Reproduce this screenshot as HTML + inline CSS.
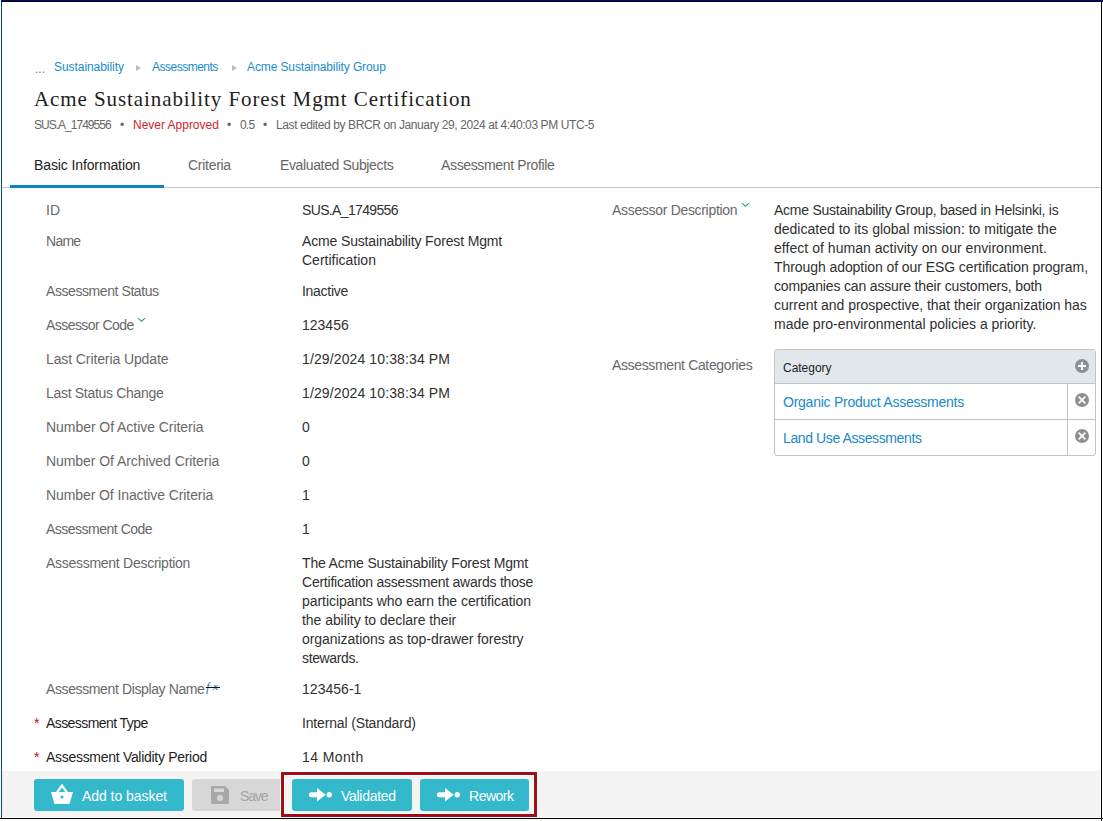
<!DOCTYPE html>
<html><head><meta charset="utf-8">
<style>
*{margin:0;padding:0;box-sizing:border-box}
html,body{width:1103px;height:821px;overflow:hidden;background:#fff}
body{position:relative;font-family:"Liberation Sans",sans-serif;font-size:14px;color:#333}
.a{position:absolute;white-space:nowrap}
.t14{font-size:14px;line-height:19px}
.lbl,.lbl2{font-size:14px;line-height:19px;color:#686868}
.val{font-size:14px;line-height:19px;color:#303030}
.lnk{font-size:14px;line-height:19px;color:#1a8ac8}
.bc{font-size:12px;line-height:16px;color:#1a8ccc}
.sub{font-size:12px;line-height:16px;color:#666}
.ttl{font-family:"Liberation Serif",serif;font-size:21px;line-height:26px;color:#1e1e1e}
.tab{font-size:14px;line-height:19px;color:#666}
.cat{font-size:12px;line-height:14px;color:#1e1e1e}
.btxt{font-size:14px;line-height:19px;color:#fff}
.btn{position:absolute;top:779px;height:32px;border-radius:3px;background:#33b8cc}
</style></head><body>
<div class="a" style="left:1px;top:0;width:1102px;height:1px;background:#000b5e"></div>
<div class="a" style="left:1px;top:1px;width:1102px;height:1px;background:#00002e"></div>
<div class="a" style="left:1px;top:2px;width:1px;height:817px;background:#00505e"></div>
<div class="a" style="left:1101px;top:2px;width:1px;height:819px;background:#000"></div>
<div class="a" style="left:0;top:818px;width:1103px;height:1px;background:#000"></div>

<div class="a" style="left:136px;top:65px;width:0;height:0;border-left:5.5px solid #bbb;border-top:3.5px solid transparent;border-bottom:3.5px solid transparent"></div>
<div class="a" style="left:232px;top:65px;width:0;height:0;border-left:5.5px solid #bbb;border-top:3.5px solid transparent;border-bottom:3.5px solid transparent"></div>
<div class="a sub" style="left:120px;top:117px">&bull;</div>
<div class="a sub" style="left:227px;top:117px">&bull;</div>
<div class="a sub" style="left:263px;top:117px">&bull;</div>

<div class="a" style="left:2px;top:187px;width:1099px;height:1px;background:#c8c8c8"></div>
<div class="a" style="left:10px;top:185px;width:154px;height:3px;background:#0a84c6"></div>

<svg class="a" style="left:137px;top:317px" width="9" height="6" viewBox="0 0 9 6"><path d="M1 1.2 L4.5 4.2 L8 1.2" fill="none" stroke="#22a56a" stroke-width="1.1"/></svg>
<svg class="a" style="left:741px;top:202px" width="9" height="6" viewBox="0 0 9 6"><path d="M1 1.2 L4.5 4.2 L8 1.2" fill="none" stroke="#22a56a" stroke-width="1.1"/></svg>
<div class="a" style="left:206px;top:680px;font-family:'Liberation Serif',serif;font-style:italic;font-size:13px;line-height:13px;color:#1a7fd0">f</div><div class="a" style="left:213px;top:682px;font-family:'Liberation Serif',serif;font-style:italic;font-weight:bold;font-size:10px;line-height:10px;color:#1a7fd0">x</div>
<div class="a" style="left:206px;top:687px;width:14px;height:1px;background:#111"></div>

<div class="a" style="left:774px;top:349px;width:322px;height:107px;border:1px solid #c4c4c4;border-radius:3px;overflow:hidden">
  <div class="a" style="left:0;top:0;width:320px;height:34px;background:#e1e8eb;border-bottom:1px solid #c4c4c4"></div>
  <div class="a" style="left:0;top:69px;width:320px;height:1px;background:#c4c4c4"></div>
  <div class="a" style="left:292px;top:34px;width:1px;height:72px;background:#c4c4c4"></div>
</div>
<svg class="a" style="left:1075px;top:359px" width="14" height="14" viewBox="0 0 14 14"><circle cx="7" cy="7" r="7" fill="#8b9094"/><path d="M7 3v8M3 7h8" stroke="#fff" stroke-width="2"/></svg>
<svg class="a" style="left:1075px;top:393px" width="14" height="14" viewBox="0 0 14 14"><circle cx="7" cy="7" r="7" fill="#8f8f8f"/><path d="M3.7 3.7l6.6 6.6M10.3 3.7l-6.6 6.6" stroke="#fff" stroke-width="1.7"/></svg>
<svg class="a" style="left:1075px;top:429px" width="14" height="14" viewBox="0 0 14 14"><circle cx="7" cy="7" r="7" fill="#8f8f8f"/><path d="M3.7 3.7l6.6 6.6M10.3 3.7l-6.6 6.6" stroke="#fff" stroke-width="1.7"/></svg>

<div class="a" style="left:2px;top:771px;width:1098px;height:46px;background:#f4f4f4"></div>
<div class="btn" style="left:34px;width:150px">
  <svg class="a" style="left:17px;top:5px" width="22" height="21" viewBox="0 0 22 21"><path d="M0 8h22l-3.5 12h-15z" fill="#fff"/><path d="M6 8.5L11 1.5L16 8.5" fill="none" stroke="#fff" stroke-width="2.2"/><circle cx="11" cy="13" r="1.6" fill="#33b8cc"/></svg>
</div>
<div class="btn" style="left:192px;width:90px;background:#d7d7d7">
  <svg class="a" style="left:19px;top:7px" width="18" height="18" viewBox="0 0 18 18"><path d="M1 0h13l4 4v13a1 1 0 0 1-1 1H1a1 1 0 0 1-1-1V1a1 1 0 0 1 1-1z" fill="#a8a8a8"/><rect x="3" y="2.5" width="10" height="3.5" fill="#d7d7d7"/><circle cx="9" cy="12" r="3" fill="#d7d7d7"/></svg>
</div>
<div class="btn" style="left:292px;width:120px">
  <svg class="a" style="left:16px;top:9px" width="24" height="14" viewBox="0 0 24 14"><path d="M3.4 6.8h7" stroke="#fff" stroke-width="5" stroke-linecap="round"/><path d="M9 0L17.7 6.8L9 13.6z" fill="#fff"/><circle cx="21.2" cy="6.8" r="2.7" fill="#fff"/></svg>
</div>
<div class="btn" style="left:420px;width:109px">
  <svg class="a" style="left:16px;top:9px" width="24" height="14" viewBox="0 0 24 14"><path d="M3.4 6.8h7" stroke="#fff" stroke-width="5" stroke-linecap="round"/><path d="M9 0L17.7 6.8L9 13.6z" fill="#fff"/><circle cx="21.2" cy="6.8" r="2.7" fill="#fff"/></svg>
</div>
<div class="a" style="left:280px;top:771px;width:258px;height:47px;border:1px solid #fff"></div>
<div class="a" style="left:281px;top:772px;width:256px;height:45px;border:3px solid #a10d16"></div>
<div class="a" style="left:284px;top:775px;width:250px;height:39px;border:1px solid #fff"></div>
<div id="bc0" class="a sub" style="left:35px;top:61px;color:#777">...</div>
<div id="bc1" class="a bc" style="left:54px;top:59px;letter-spacing:-0.061px;">Sustainability</div>
<div id="bc2" class="a bc" style="left:152px;top:59px;letter-spacing:-0.500px;">Assessments</div>
<div id="bc3" class="a bc" style="left:247px;top:59px;letter-spacing:-0.108px;">Acme Sustainability Group</div>
<div id="title" class="a ttl" style="left:34px;top:86px;letter-spacing:0.914px;">Acme Sustainability Forest Mgmt Certification</div>
<div id="sub1" class="a sub" style="left:34px;top:117px;letter-spacing:-0.983px;">SUS.A_1749556</div>
<div id="sub2" class="a sub" style="left:133px;top:117px;letter-spacing:-0.016px;color:#d4232c">Never Approved</div>
<div id="sub3" class="a sub" style="left:240px;top:117px;letter-spacing:-0.800px;">0.5</div>
<div id="sub4" class="a sub" style="left:276px;top:117px;letter-spacing:-0.397px;">Last edited by BRCR on January 29, 2024 at 4:40:03 PM UTC-5</div>
<div id="tab1" class="a tab" style="left:34px;top:156px;letter-spacing:-0.113px;color:#222">Basic Information</div>
<div id="tab2" class="a tab" style="left:188px;top:156px;letter-spacing:-0.285px;">Criteria</div>
<div id="tab3" class="a tab" style="left:280px;top:156px;letter-spacing:-0.364px;">Evaluated Subjects</div>
<div id="tab4" class="a tab" style="left:441px;top:156px;letter-spacing:-0.353px;">Assessment Profile</div>
<div id="l_id" class="a lbl" style="left:46px;top:201px;letter-spacing:0.200px;">ID</div>
<div id="v_id" class="a val" style="left:302px;top:201px;letter-spacing:-0.650px;">SUS.A_1749556</div>
<div id="l_name" class="a lbl" style="left:46px;top:232px;letter-spacing:-0.733px;">Name</div>
<div id="v_name" class="a val" style="left:302px;top:232px;letter-spacing:-0.147px;">Acme Sustainability Forest Mgmt</div>
<div id="l_status" class="a lbl" style="left:46px;top:282px;letter-spacing:-0.424px;">Assessment Status</div>
<div id="v_status" class="a val" style="left:302px;top:282px;letter-spacing:-0.285px;">Inactive</div>
<div id="l_acode" class="a lbl" style="left:46px;top:316px;letter-spacing:-0.550px;">Assessor Code</div>
<div id="v_acode" class="a val" style="left:302px;top:316px;">123456</div>
<div id="l_lcu" class="a lbl" style="left:46px;top:350px;letter-spacing:-0.105px;">Last Criteria Update</div>
<div id="v_lcu" class="a val" style="left:302px;top:350px;letter-spacing:0.120px;">1/29/2024 10:38:34 PM</div>
<div id="l_lsc" class="a lbl" style="left:46px;top:384px;letter-spacing:-0.306px;">Last Status Change</div>
<div id="v_lsc" class="a val" style="left:302px;top:384px;letter-spacing:0.120px;">1/29/2024 10:38:34 PM</div>
<div id="l_act" class="a lbl" style="left:46px;top:418px;letter-spacing:-0.050px;">Number Of Active Criteria</div>
<div id="v_act" class="a val" style="left:302px;top:418px;">0</div>
<div id="l_arch" class="a lbl" style="left:46px;top:452px;letter-spacing:-0.069px;">Number Of Archived Criteria</div>
<div id="v_arch" class="a val" style="left:302px;top:452px;">0</div>
<div id="l_inact" class="a lbl" style="left:46px;top:486px;letter-spacing:-0.092px;">Number Of Inactive Criteria</div>
<div id="v_inact" class="a val" style="left:302px;top:486px;">1</div>
<div id="l_code" class="a lbl" style="left:46px;top:520px;letter-spacing:-0.500px;">Assessment Code</div>
<div id="v_code" class="a val" style="left:302px;top:520px;">1</div>
<div id="l_desc" class="a lbl" style="left:46px;top:554px;letter-spacing:-0.276px;">Assessment Description</div>
<div id="l_dname" class="a lbl" style="left:46px;top:680px;letter-spacing:-0.382px;">Assessment Display Name</div>
<div id="v_dname" class="a val" style="left:302px;top:680px;letter-spacing:0.029px;">123456-1</div>
<div id="l_type" class="a lbl" style="left:46px;top:714px;letter-spacing:-0.572px;color:#1e1e1e">Assessment Type</div>
<div id="v_type" class="a val" style="left:302px;top:714px;letter-spacing:-0.155px;">Internal (Standard)</div>
<div id="l_valid" class="a lbl" style="left:46px;top:748px;letter-spacing:-0.296px;color:#1e1e1e">Assessment Validity Period</div>
<div id="v_valid" class="a val" style="left:302px;top:748px;letter-spacing:0.400px;">14 Month</div>
<div id="v_name2" class="a val" style="left:302px;top:251px;">Certification</div>
<div id="v_desc0" class="a val" style="left:302px;top:554px;letter-spacing:-0.165px;">The Acme Sustainability Forest Mgmt</div>
<div id="v_desc1" class="a val" style="left:302px;top:573px;letter-spacing:-0.234px;">Certification assessment awards those</div>
<div id="v_desc2" class="a val" style="left:302px;top:592px;letter-spacing:-0.053px;">participants who earn the certification</div>
<div id="v_desc3" class="a val" style="left:302px;top:611px;letter-spacing:-0.051px;">the ability to declare their</div>
<div id="v_desc4" class="a val" style="left:302px;top:630px;letter-spacing:-0.051px;">organizations as top-drawer forestry</div>
<div id="v_desc5" class="a val" style="left:302px;top:649px;letter-spacing:-0.375px;">stewards.</div>
<div id="ast1" class="a t14" style="left:34px;top:714px;color:#d0021b">*</div>
<div id="ast2" class="a t14" style="left:34px;top:748px;color:#d0021b">*</div>
<div id="l_adesc" class="a lbl2" style="left:612px;top:201px;letter-spacing:-0.315px;">Assessor Description</div>
<div id="rd0" class="a val" style="left:774px;top:201px;letter-spacing:-0.251px;">Acme Sustainability Group, based in Helsinki, is</div>
<div id="rd1" class="a val" style="left:774px;top:220px;letter-spacing:0.004px;">dedicated to its global mission: to mitigate the</div>
<div id="rd2" class="a val" style="left:774px;top:239px;letter-spacing:0.037px;">effect of human activity on our environment.</div>
<div id="rd3" class="a val" style="left:774px;top:258px;letter-spacing:-0.070px;">Through adoption of our ESG certification program,</div>
<div id="rd4" class="a val" style="left:774px;top:277px;letter-spacing:-0.161px;">companies can assure their customers, both</div>
<div id="rd5" class="a val" style="left:774px;top:296px;letter-spacing:-0.047px;">current and prospective, that their organization has</div>
<div id="rd6" class="a val" style="left:774px;top:315px;letter-spacing:-0.010px;">made pro-environmental policies a priority.</div>
<div id="l_acat" class="a lbl2" style="left:612px;top:356px;letter-spacing:-0.360px;">Assessment Categories</div>
<div id="cat" class="a cat" style="left:783px;top:361px;letter-spacing:-0.029px;">Category</div>
<div id="org" class="a lnk" style="left:783px;top:393px;letter-spacing:-0.246px;">Organic Product Assessments</div>
<div id="land" class="a lnk" style="left:783px;top:429px;letter-spacing:-0.390px;">Land Use Assessments</div>
<div id="b_add" class="a btxt" style="left:82px;top:787px;letter-spacing:-0.050px;">Add to basket</div>
<div id="b_save" class="a btxt" style="left:240px;top:787px;letter-spacing:-1.133px;color:#a5a5a5">Save</div>
<div id="b_val" class="a btxt" style="left:341px;top:787px;letter-spacing:-0.275px;">Validated</div>
<div id="b_rew" class="a btxt" style="left:469px;top:787px;letter-spacing:-0.480px;">Rework</div>

</body></html>
